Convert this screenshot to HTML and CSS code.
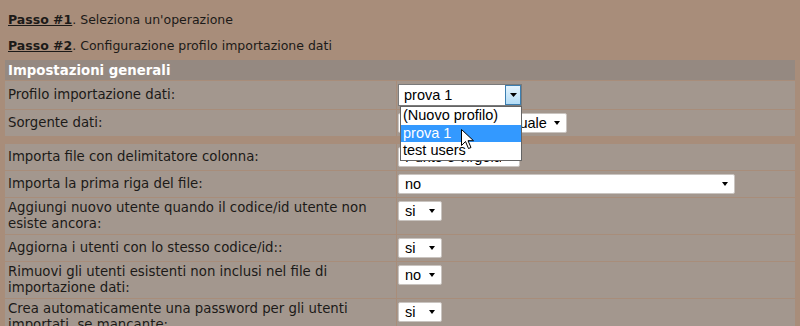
FILE: index.html
```html
<!DOCTYPE html>
<html lang="it">
  <head>
    <meta charset="UTF-8" />
    <title>Importazione dati utenti</title>
    <link rel="stylesheet" href="styles.css">
  </head>
  <body>
    <div class="steps">
      <p><span class="step">Passo #1</span>. Seleziona un'operazione</p>
      <p><span class="step">Passo #2</span>. Configurazione profilo importazione dati</p>
    </div>

    <table class="form">
      <colgroup>
        <col class="col-label">
        <col>
      </colgroup>
      <tr>
        <th colspan="2">Impostazioni generali</th>
      </tr>
      <tr>
        <td class="label">Profilo importazione dati:</td>
        <td class="val">
          <span class="combo">
            <select class="combo-select">
              <option>prova 1</option>
            </select>
            <span class="combo-btn">
              <svg width="7" height="4" viewBox="0 0 7 4"><path d="M0 0h7L3.5 4z" fill="#000"/></svg>
            </span>
            <ul class="listbox">
              <li>(Nuovo profilo)</li>
              <li class="hover">prova 1</li>
              <li>test users</li>
            </ul>
            <svg class="cursor" width="13" height="21" viewBox="0 0 13 21">
              <path d="M0.5 0.5v16l4-4 3 7 2.5-1-3-6.8h5.5z" fill="#fff" stroke="#000" stroke-width="1" stroke-linejoin="round"/>
            </svg>
          </span>
        </td>
      </tr>
      <tr>
        <td class="label">Sorgente dati:</td>
        <td class="val">
          <span class="pick"><select class="w-source"><option>Caricamento manuale</option></select></span>
        </td>
      </tr>
    </table>

    <table class="form second">
      <colgroup>
        <col class="col-label">
        <col>
      </colgroup>
      <tr>
        <td class="label">Importa file con delimitatore colonna:</td>
        <td class="val">
          <span class="pick"><select class="w-delim"><option>Punto e virgola</option></select></span>
        </td>
      </tr>
      <tr>
        <td class="label">Importa la prima riga del file:</td>
        <td class="val">
          <span class="pick"><select class="w-wide"><option>no</option></select></span>
        </td>
      </tr>
      <tr>
        <td class="label">Aggiungi nuovo utente quando il codice/id utente non esiste ancora:</td>
        <td class="val">
          <span class="pick"><select class="w-small"><option>si</option></select></span>
        </td>
      </tr>
      <tr>
        <td class="label">Aggiorna i utenti con lo stesso codice/id::</td>
        <td class="val">
          <span class="pick"><select class="w-small"><option>si</option></select></span>
        </td>
      </tr>
      <tr>
        <td class="label">Rimuovi gli utenti esistenti non inclusi nel file di importazione dati:</td>
        <td class="val">
          <span class="pick"><select class="w-small"><option>no</option></select></span>
        </td>
      </tr>
      <tr>
        <td class="label">Crea automaticamente una password per gli utenti importati, se mancante:</td>
        <td class="val">
          <span class="pick"><select class="w-small"><option>si</option></select></span>
        </td>
      </tr>
    </table>
  </body>
</html>
```

FILE: styles.css
```css
body {
  margin: 4px;
  background-color: #a88d7a;
  font-family: "DejaVu Sans", Verdana, sans-serif;
  font-size: 13.3px;
  color: #1c1a18;
}

.steps {
  padding: 3px 4px 0;
  font-size: 12.5px;
}
.steps p {
  margin: 0;
  line-height: 26px;
}
.step {
  font-weight: bold;
  text-decoration: underline;
}

.form {
  width: 100%;
  border-collapse: separate;
  border-spacing: 1px;
  table-layout: fixed;
}
.form.second {
  margin-top: 6px;
}
.form .col-label {
  width: 391px;
}
.form th {
  background-color: #958981;
  color: #fff;
  text-align: left;
  font-size: 13.3px;
  height: 20px;
  padding: 0 3px;
}
.form td {
  background-color: #a3978e;
}
.form td.label {
  padding: 2px 3px;
  line-height: 16px;
  vertical-align: middle;
}
.form td.val {
  padding: 3px 1px;
  line-height: 20px;
  vertical-align: top;
}

/* selects chiusi */
.pick {
  position: relative;
  display: inline-block;
  vertical-align: top;
}
.pick select {
  appearance: none;
  -webkit-appearance: none;
  display: block;
  height: 20px;
  margin: 0;
  padding: 0 18px 0 6px;
  border: 1px solid #c9c4c0;
  border-radius: 2px;
  background-color: #fff;
  color: #000;
  font-family: "Liberation Sans", Arial, sans-serif;
  font-size: 14.5px;
}
.pick::after {
  content: "";
  position: absolute;
  right: 7px;
  top: 8px;
  border-left: 3.5px solid transparent;
  border-right: 3.5px solid transparent;
  border-top: 4px solid #000;
  pointer-events: none;
}
.w-small { width: 44px; }
.w-delim { width: 122px; }
.w-source { width: 169px; }
.w-wide { width: 337px; }

/* combo aperta */
.combo {
  position: relative;
  display: inline-block;
  vertical-align: top;
}
.combo-select {
  appearance: none;
  -webkit-appearance: none;
  display: block;
  width: 124px;
  height: 22px;
  margin: 0;
  padding: 0 18px 0 5px;
  border: 1px solid #7a7a7a;
  border-radius: 0;
  background-color: #fff;
  color: #000;
  font-family: "Liberation Sans", Arial, sans-serif;
  font-size: 14.5px;
}
.combo-btn {
  position: absolute;
  right: 1px;
  top: 1px;
  width: 14px;
  height: 18px;
  border: 1px solid #3c7fb1;
  background: linear-gradient(#e5f4fd, #b3dcf6);
  display: flex;
  align-items: center;
  justify-content: center;
}
.combo-btn svg {
  display: block;
}
.listbox {
  position: absolute;
  top: 22px;
  left: 2px;
  z-index: 2;
  width: 120px;
  margin: 0;
  padding: 0;
  list-style: none;
  border: 1px solid #646464;
  background-color: #fff;
  font-family: "Liberation Sans", Arial, sans-serif;
  font-size: 14.5px;
  line-height: 17px;
  color: #000;
}
.listbox li {
  height: 17.5px;
  padding: 0 2px;
  white-space: nowrap;
}
.listbox li.hover {
  background-color: #3399ff;
  color: #fff;
}
.cursor {
  position: absolute;
  left: 63px;
  top: 45px;
  z-index: 3;
}
```
